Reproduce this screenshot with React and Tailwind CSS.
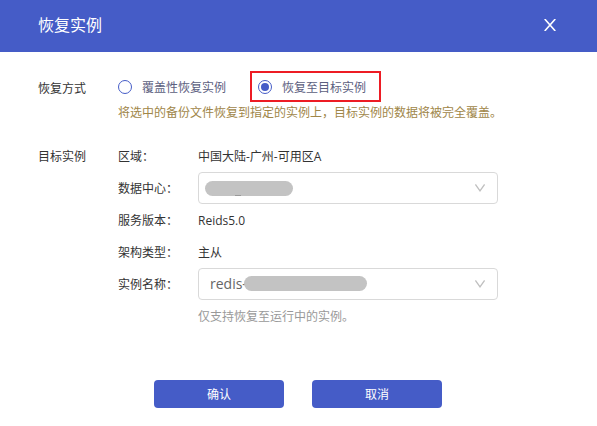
import { useId } from "react";

const radioStyle =
  "m-0 h-[14px] w-[14px] shrink-0 appearance-none rounded-full border border-[#455cc7] bg-white bg-clip-content p-[2px] checked:bg-[#455cc7]";

function RadioOption({ label, value, defaultChecked, className }) {
  const id = useId();
  return (
    <div className={"flex items-center " + className}>
      <input
        id={id}
        type="radio"
        name="mode"
        value={value}
        defaultChecked={defaultChecked}
        className={radioStyle}
      />
      <label htmlFor={id} className="whitespace-nowrap pl-[10px] pt-0.5 text-[#5c6080]">
        {label}
      </label>
    </div>
  );
}

function Select({ id, text, children }) {
  return (
    <div className="relative w-full">
      <select
        id={id}
        className="block h-8 w-full appearance-none rounded-[4px] border border-[#d9d9d9] bg-white pl-[11px] pr-8 text-sm text-[#666666] outline-none"
      >
        <option>{text}</option>
      </select>
      <svg
        viewBox="0 0 10 8"
        className="pointer-events-none absolute right-[13px] top-3 h-2 w-[10px]"
        fill="none"
        stroke="#bfbfbf"
        strokeWidth="1.3"
      >
        <path d="M0.4 0.4 L5 6.8 L9.6 0.4" />
      </svg>
      {children}
    </div>
  );
}

function Row({ label, htmlFor, children }) {
  return (
    <div className="flex h-8 items-center">
      <label htmlFor={htmlFor} className="w-20 shrink-0 pt-0.5">
        {label}
      </label>
      <div className="min-w-0 max-w-[300px] flex-1">{children}</div>
    </div>
  );
}

function Value({ children }) {
  return <p className="pt-0.5">{children}</p>;
}

const buttonStyle = "h-7 w-[130px] rounded-[4px] bg-[#455cc7] pt-0.5 text-xs text-white";

export default function App() {
  return (
    <div
      lang="zh-CN"
      className="min-h-screen bg-white font-['Open_Sans','Noto_Sans_CJK_SC',sans-serif] text-xs text-[#333333]"
    >
      <header className="flex h-[52px] items-center justify-between bg-[#455cc7] pb-0.5 pl-[38px] pr-[41px] text-white">
        <h1 className="text-base font-normal">恢复实例</h1>
        <button type="button" aria-label="关闭">
          <svg viewBox="0 0 12 12" className="block h-3 w-3" fill="none" stroke="white" strokeWidth="1.6">
            <path d="M0.7 0 L11.3 12 M11.3 0 L0.7 12" />
          </svg>
        </button>
      </header>

      <form className="px-[38px] pt-[19px]">
        <section className="flex">
          <div className="flex h-9 w-20 shrink-0 items-center">恢复方式</div>
          <div>
            <div className="flex h-[31px] items-center">
              <RadioOption label="覆盖性恢复实例" value="overwrite" className="mr-6 h-full" />
              <RadioOption
                label="恢复至目标实例"
                value="target"
                defaultChecked
                className="h-full border-2 border-[#ed1c24] pl-[6px] pr-[13px]"
              />
            </div>
            <p className="pt-px leading-5 text-[#a08648]">
              将选中的备份文件恢复到指定的实例上，目标实例的数据将被完全覆盖。
            </p>
          </div>
        </section>

        <section className="mt-[17px] flex">
          <div className="flex h-8 w-20 shrink-0 items-center pt-0.5">目标实例</div>
          <div className="min-w-0 flex-1">
            <Row label="区域：">
              <Value>中国大陆-广州-可用区A</Value>
            </Row>
            <Row label="数据中心：" htmlFor="datacenter">
              <Select id="datacenter" text="">
                <span className="pointer-events-none absolute left-[7px] top-[9px] flex h-[15px] w-[88px] items-end rounded-full bg-[#c3c3c3] pl-[30px]">
                  <span className="h-px w-[6px] bg-[#999999]" />
                </span>
              </Select>
            </Row>
            <Row label="服务版本：">
              <Value>Reids5.0</Value>
            </Row>
            <Row label="架构类型：">
              <Value>主从</Value>
            </Row>
            <Row label="实例名称：" htmlFor="instance">
              <Select id="instance" text="redis-">
                <span className="pointer-events-none absolute left-[46px] top-2 h-[15px] w-[123px] rounded-full bg-[#c3c3c3]" />
              </Select>
            </Row>
            <p className="pl-20 pt-px leading-8 text-[#999999]">仅支持恢复至运行中的实例。</p>
          </div>
        </section>

        <div className="mt-[47px] flex justify-center gap-7 pb-[18px] pr-px">
          <button type="submit" className={buttonStyle}>
            确认
          </button>
          <button type="button" className={buttonStyle}>
            取消
          </button>
        </div>
      </form>
    </div>
  );
}
